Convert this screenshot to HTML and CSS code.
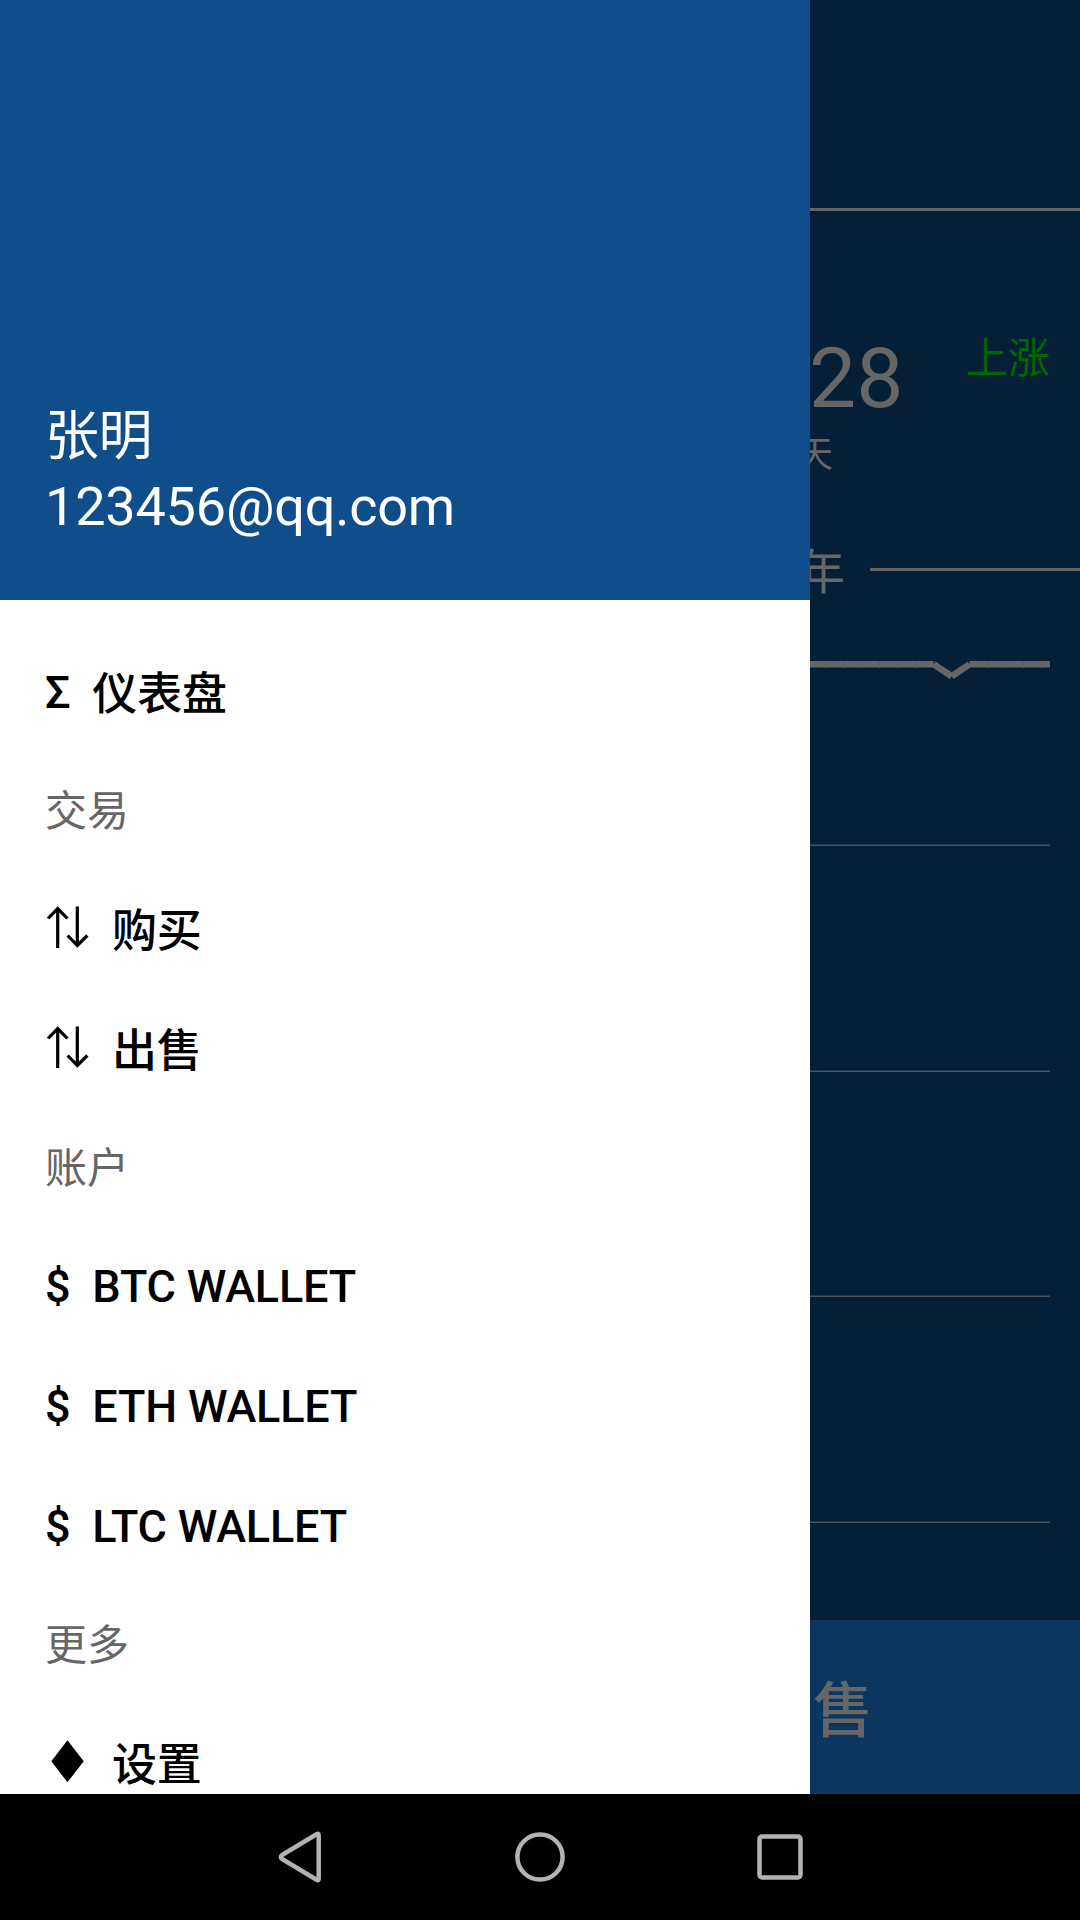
FILE: index.html
```html
<!DOCTYPE html>
<html lang="zh-CN">
<head>
<meta charset="utf-8">
<title>钱包</title>
<link rel="stylesheet" href="styles.css">
</head>
<body>
<div class="screen">
  <div class="main">
    <aside class="drawer">
      <header class="profile">
        <div class="profile-name">张明</div>
        <div class="profile-mail">123456@qq.com</div>
      </header>
      <nav class="menu">
        <a class="item">Σ  <span class="han">仪表盘</span></a>
        <div class="group">交易</div>
        <a class="item"><svg class="glyph" viewBox="0 0 45 45"><path d="M12.7 43V3M3 13.5 12.7 3.6 22.4 13.5M32.3 1.500V41M22.600 30.500 32.300 40.400 42.400 30.500"/></svg>  <span class="han">购买</span></a>
        <a class="item"><svg class="glyph" viewBox="0 0 45 45"><path d="M12.7 43V3M3 13.5 12.7 3.6 22.4 13.5M32.3 1.500V41M22.600 30.500 32.300 40.400 42.400 30.500"/></svg>  <span class="han">出售</span></a>
        <div class="group">账户</div>
        <a class="item">$  BTC WALLET</a>
        <a class="item">$  ETH WALLET</a>
        <a class="item">$  LTC WALLET</a>
        <div class="group">更多</div>
        <a class="item"><svg class="glyph solid" viewBox="0 0 45 45"><path d="M22.500 1.300 38.700 22.300 22.500 43.300 6.300 22.300Z"/></svg>  <span class="han">设置</span></a>
      </nav>
    </aside>
    <section class="page">
      <div class="topbar"></div>
      <div class="quote">
        <div class="quote-left">
          <div class="price">28</div>
          <div class="period">天</div>
        </div>
        <div class="trend">上涨</div>
      </div>
      <div class="range"><span class="range-label">年</span><span class="range-line"></span></div>
      <svg class="chart" viewBox="0 0 240 30">
        <path d="M0 14.300H123.700M123.700 14.300 141.700 26.300M141.700 26.300 159.700 14.300M159.700 14.300H240"/>
        <path class="seams" d="M15.500 11V18M33.500 11V18M51.500 11V18M69.500 11V18M87.500 11V18M105.500 11V18M177.500 11V18M195.500 11V18M213.500 11V18M231.500 11V18"/>
      </svg>
      <div class="rows">
        <div class="row"></div>
        <div class="row"></div>
        <div class="row"></div>
        <div class="row"></div>
      </div>
      <div class="action">售</div>
    </section>
  </div>
  <footer class="softkeys">
    <svg viewBox="0 0 60 60"><path d="M48.700 8.200V51.800Q48.700 54 46.500 52.800L12 32Q10 30 12 28L46.500 7.200Q48.700 6 48.700 8.200Z"/></svg>
    <svg viewBox="0 0 60 60"><circle cx="30" cy="30" r="22.600"/></svg>
    <svg viewBox="0 0 60 60"><rect x="9.500" y="9.500" width="41" height="41" rx="2.500"/></svg>
  </footer>
</div>
</body>
</html>
```
FILE: styles.css
```css
* { box-sizing: border-box; }
body {
  margin: 0;
  background: #000;
  font-family: Roboto, "Noto Sans CJK SC", sans-serif;
}
.screen {
  display: grid;
  grid-template-rows: 1794px 126px;
  width: 1080px;
  height: 1920px;
  overflow: hidden;
}
.main {
  display: grid;
  grid-template-columns: 810px 270px;
  overflow: hidden;
}
.drawer {
  background: #fff;
  overflow: hidden;
}
.profile {
  display: flex;
  flex-direction: column;
  justify-content: flex-end;
  height: 600px;
  padding: 0 45px 57px;
  background: #104e8b;
  color: #fff;
  font-size: 54px;
  line-height: 72px;
}
.profile-name {
  margin-bottom: -2px;
  letter-spacing: -0.500px;
}
.profile-mail { letter-spacing: -0.200px; }
.menu { padding-top: 33px; }
.item, .group {
  display: block;
  padding-left: 45px;
  white-space: pre;
}
.item {
  height: 120px;
  color: #000;
  font-size: 45px;
  font-weight: 500;
  letter-spacing: -0.200px;
  line-height: 120px;
}
.han {
  display: inline-block;
  vertical-align: -2px;
  line-height: 1;
}
.group {
  height: 117px;
  color: #666;
  font-size: 42px;
  line-height: 117px;
}
.glyph {
  width: 45px;
  height: 45px;
  vertical-align: -5px;
  fill: none;
  stroke: #000;
  stroke-width: 3.200;
}
.glyph.solid {
  fill: #000;
  stroke: none;
}
.page {
  display: flex;
  flex-direction: column;
  background: #041f36;
  color: #666;
  overflow: hidden;
}
.topbar {
  height: 211px;
  border-bottom: 3px solid #666;
}
.quote {
  display: flex;
  justify-content: space-between;
  height: 313px;
  padding: 119px 30px 0 0;
}
.price {
  margin-left: -1px;
  font-size: 84px;
  line-height: 98px;
}
.period {
  margin-left: -13px;
  font-size: 36px;
  line-height: 54px;
}
.trend {
  color: #060;
  font-size: 42px;
  line-height: 58px;
}
.range {
  display: flex;
  align-items: center;
  gap: 25px;
  height: 90px;
}
.range-label {
  margin-left: -13px;
  padding-bottom: 3px;
  font-size: 48px;
}
.range-line {
  flex: 1;
  height: 3px;
  background: #666;
}
.chart {
  width: 240px;
  height: 30px;
  margin-top: 36px;
  fill: none;
  stroke: #666;
  stroke-width: 6.500;
}
.seams {
  stroke: #585d62;
  stroke-width: 1;
}
.rows {
  flex: 1;
  padding-right: 30px;
}
.row {
  height: 225.500px;
  border-bottom: 1px solid #4d565d;
  box-shadow: inset 0 -1px #22374a;
}
.row:first-child { height: 166px; }
.action {
  height: 174px;
  padding: 5px 0 0 3px;
  background: #0b365f;
  font-size: 60px;
  font-weight: 500;
  line-height: 174px;
}
.softkeys {
  display: grid;
  grid-template-columns: repeat(3, 240px);
  justify-content: center;
  align-items: center;
  justify-items: center;
  background: #000;
}
.softkeys svg {
  width: 60px;
  height: 60px;
  fill: none;
  stroke: #b3b3b3;
  stroke-width: 4.500;
}
```
